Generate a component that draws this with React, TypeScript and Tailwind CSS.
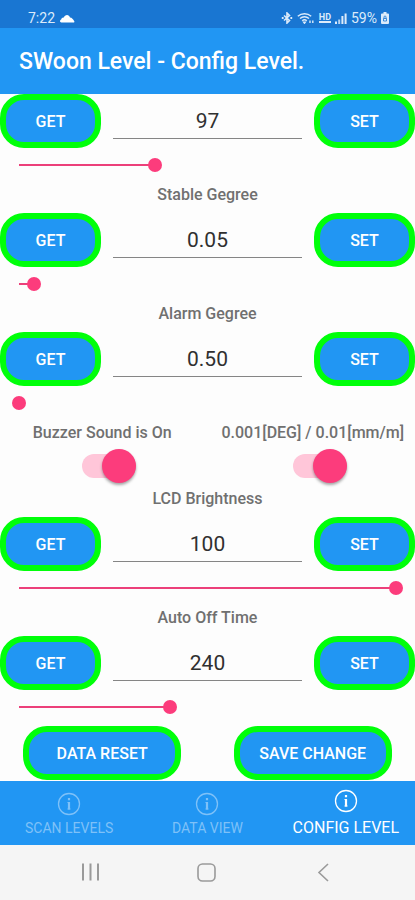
import { useState } from "react";

type Setting = {
  id: string;
  label: string;
  value: string;
  percent: number;
};

const levelSettings: Setting[] = [
  { id: "stable", label: "Stable Gegree", value: "0.05", percent: 4 },
  { id: "alarm", label: "Alarm Gegree", value: "0.50", percent: 0 },
];

const deviceSettings: Setting[] = [
  { id: "lcd", label: "LCD Brightness", value: "100", percent: 100 },
  { id: "autoOff", label: "Auto Off Time", value: "240", percent: 40 },
];

const tabs = [
  { name: "SCAN LEVELS", active: false },
  { name: "DATA VIEW", active: false },
  { name: "CONFIG LEVEL", active: true },
];

const buttonStyle =
  "h-[54px] rounded-[24px] border-[6px] border-[#00ff0a] bg-[#2196f3] pt-[2px] text-base font-medium text-white";

function StatusBar() {
  return (
    <div className="flex h-7 items-end justify-between bg-[#1976d2] pr-[26px] pl-7 text-sm text-[#dcebfa]">
      <div className="flex h-5 items-center gap-1">
        <span>7:22</span>
        <svg className="h-[10px] w-4" viewBox="0 0 16 10" fill="white">
          <path d="M2.300 9.500C.8 9.500.5 7.200 2.200 6.600 2.400 5.200 3.600 4.400 4.800 4.600 5.800 1.200 10.200 1 11 4.600 13 4.800 14 6.200 15.300 8.200 15.600 9 15.200 9.500 14.500 9.500Z" />
        </svg>
      </div>
      <div className="flex h-5 items-center gap-1">
        <svg className="h-3 w-3" viewBox="0 0 12 12" fill="none" stroke="currentColor" strokeWidth="1.600">
          <path d="m3 3.500 5.500 5L6 11V1l2.500 2.500L3 8.500" />
          <path d="M.8 6h1.800M9.400 6h1.800" strokeWidth="2" />
        </svg>
        <svg className="h-3 w-[18px]" viewBox="0 0 18 12" fill="none" stroke="currentColor" strokeWidth="1.400">
          <path d="M.8 4.300a10 10 0 0 1 13.400 0M3 6.600a6.500 6.500 0 0 1 9 0M5.200 8.800a3.400 3.400 0 0 1 4.600 0" />
          <path d="M7.500 11.200 6.800 10.300h1.400ZM13 8.500v2.500M15.800 8.500v2.500" />
        </svg>
        <span className="border-b-2 border-current text-[9px] leading-[8px] font-bold">HD</span>
        <svg className="h-3 w-3" viewBox="0 0 12 12" fill="currentColor">
          <path d="M0 9.500h2V12H0Z" />
          <path d="M3.200 7.500h2V12h-2Z" opacity=".8" />
          <path d="M6.400 4h2v8h-2Z" />
          <path d="M9.600 1.500h2V12h-2Z" />
        </svg>
        <span>59%</span>
        <svg className="h-3 w-2" viewBox="0 0 8 12">
          <path d="M2.500 0h3v1.500H7a1 1 0 0 1 1 1V11a1 1 0 0 1-1 1H1a1 1 0 0 1-1-1V2.500a1 1 0 0 1 1-1h1.500Z" fill="currentColor" />
          <path d="M2.500 6.500h3V9h-3ZM3 6.500V5a1 1 0 0 1 2 0v1.500" fill="none" stroke="#1976d2" strokeWidth=".8" />
        </svg>
      </div>
    </div>
  );
}

function Slider({ name, initial }: { name: string; initial: number }) {
  const [percent, setPercent] = useState(initial);

  return (
    <div className="flex h-[34px] items-center px-3">
      <input
        type="range"
        aria-label={name}
        value={percent}
        onChange={(e) => setPercent(Number(e.target.value))}
        className="h-[14px] w-full appearance-none bg-linear-to-r from-[#ec407a] to-[#ec407a] bg-[position:7px_center] bg-no-repeat [&::-webkit-slider-thumb]:size-[14px] [&::-webkit-slider-thumb]:appearance-none [&::-webkit-slider-thumb]:rounded-full [&::-webkit-slider-thumb]:bg-[#fc3c7c]"
        style={{ backgroundSize: `calc((100% - 14px) * ${percent / 100}) 2px` }}
      />
    </div>
  );
}

function SettingRow({ id, name, value, percent }: { id: string; name: string; value: string; percent: number }) {
  return (
    <>
      <div className="flex items-center gap-3">
        <button type="button" className={`${buttonStyle} w-[101px] shrink-0`}>GET</button>
        <input
          id={id}
          type="text"
          aria-label={name}
          defaultValue={value}
          className="h-9 w-0 min-w-0 flex-1 border-b border-[#858585] text-center text-[21px] text-[#303030] outline-none"
        />
        <button type="button" className={`${buttonStyle} w-[101px] shrink-0`}>SET</button>
      </div>
      <Slider name={`${name} slider`} initial={percent} />
    </>
  );
}

function SettingBlock({ setting }: { setting: Setting }) {
  return (
    <div>
      <label htmlFor={setting.id} className="mb-[5px] block text-center text-base leading-[26px] font-medium text-[#707070]">
        {setting.label}
      </label>
      <SettingRow id={setting.id} name={setting.label} value={setting.value} percent={setting.percent} />
    </div>
  );
}

function Toggle({ id, label }: { id: string; label: string }) {
  return (
    <div className="flex flex-col items-center">
      <label htmlFor={id} className="text-base leading-[26px] font-medium whitespace-nowrap text-[#707070]">
        {label}
      </label>
      <div className="flex h-10 items-center pl-[14px]">
        <input
          id={id}
          type="checkbox"
          role="switch"
          defaultChecked
          className="flex h-6 w-[54px] appearance-none items-center rounded-full bg-gray-300 before:size-[34px] before:rounded-full before:bg-gray-50 before:shadow-[0_2px_3px_rgba(0,0,0,0.35)] checked:justify-end checked:bg-[#ffc6d9] checked:before:bg-[#fc3c7c]"
        />
      </div>
    </div>
  );
}

function TabBar() {
  return (
    <nav className="grid h-16 grid-cols-3 bg-[#2196f3]">
      {tabs.map((tab) => (
        <a
          key={tab.name}
          href="#"
          className={`flex flex-col items-center whitespace-nowrap ${
            tab.active ? "gap-[5px] pt-2 text-base text-white" : "gap-[2px] pt-[11px] text-sm text-[#7ec1f8]"
          }`}
        >
          <svg className="size-6 shrink-0" viewBox="0 0 24 24" fill="none" stroke="currentColor">
            <circle cx="12" cy="12" r="10.500" strokeWidth="1.300" />
            <path d="M12 6v2.200M12 10v7.500" strokeWidth="2.200" />
            <path d="M10.500 10.500H12M10.500 17h3" />
          </svg>
          <span className="leading-5">{tab.name}</span>
        </a>
      ))}
    </nav>
  );
}

function SystemNav() {
  return (
    <div className="flex h-[55px] justify-center gap-[92px] bg-[#f5f5f5] pt-[15px] text-[#9a9a9a]">
      <button type="button" aria-label="Recent apps" className="size-6">
        <svg viewBox="0 0 24 24" fill="none" stroke="currentColor" strokeWidth="2">
          <path d="M3 3.500v17M10.500 3.500v17M18 3.500v17" />
        </svg>
      </button>
      <button type="button" aria-label="Home" className="size-6">
        <svg viewBox="0 0 24 24" fill="none" stroke="currentColor" strokeWidth="1.600">
          <rect x="2" y="4" width="17" height="17" rx="4.500" />
        </svg>
      </button>
      <button type="button" aria-label="Back" className="size-6">
        <svg viewBox="0 0 24 24" fill="none" stroke="currentColor" strokeWidth="1.600">
          <path d="M16 4 7 12.500l9 8.500" />
        </svg>
      </button>
    </div>
  );
}

export default function App() {
  return (
    <div className="flex min-h-screen flex-col bg-[#fdfdfd] font-[Roboto,sans-serif]">
      <StatusBar />
      <header className="flex h-[66px] items-center bg-[#2196f3] px-[19px] pt-[2px]">
        <h1 className="text-[23px] font-medium text-white">SWoon Level - Config Level.</h1>
      </header>

      <main className="flex-1">
        <SettingRow id="level" name="Level" value="97" percent={36} />
        {levelSettings.map((s) => (
          <SettingBlock key={s.id} setting={s} />
        ))}

        {/* Switches */}
        <div className="grid grid-cols-2 gap-[6px]">
          <Toggle id="buzzer" label="Buzzer Sound is On" />
          <Toggle id="unit" label="0.001[DEG] / 0.01[mm/m]" />
        </div>

        {deviceSettings.map((s) => (
          <SettingBlock key={s.id} setting={s} />
        ))}

        <div className="grid grid-cols-2 justify-items-center gap-[6px] pt-[2px]">
          <button type="button" className={`${buttonStyle} w-[158px]`}>DATA RESET</button>
          <button type="button" className={`${buttonStyle} w-[158px]`}>SAVE CHANGE</button>
        </div>
      </main>

      <TabBar />
      <SystemNav />
    </div>
  );
}
